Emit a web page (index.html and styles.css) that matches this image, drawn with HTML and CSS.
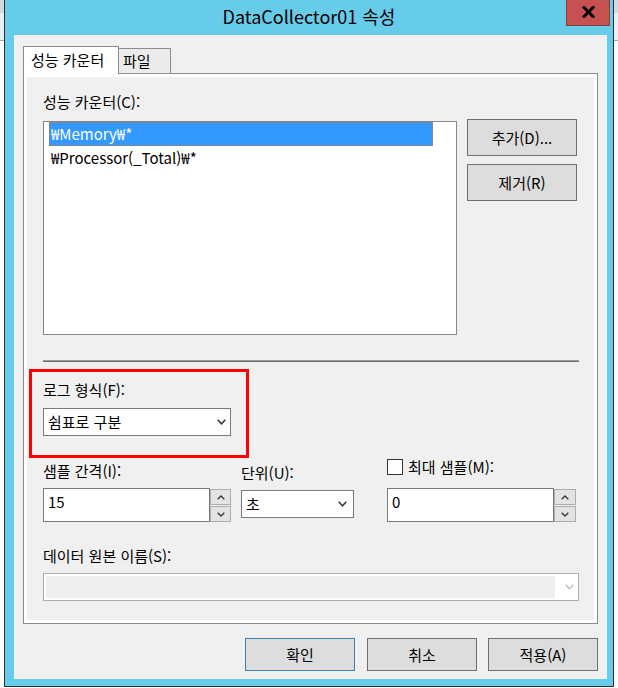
FILE: index.html
```html
<!DOCTYPE html>
<html lang="ko">
<head>
<meta charset="utf-8">
<title>DataCollector01 속성</title>
<link rel="stylesheet" href="styles.css">
</head>
<body>
<div class="window">
  <div class="titlebar">
    <div class="title">DataCollector01 속성</div>
    <div class="close">
      <svg width="13" height="12" viewBox="0 0 13 12"><path d="M2 1.5 L11 10.5 M11 1.5 L2 10.5" stroke="#000" stroke-width="3" stroke-linecap="square" fill="none"/></svg>
    </div>
  </div>
  <div class="client">
    <div class="tabs">
      <div class="tab active">성능 카운터</div>
      <div class="tab">파일</div>
    </div>
    <div class="panel">
      <div class="lbl">성능 카운터(C):</div>
      <div class="counters">
        <div class="listbox">
          <div class="item selected">₩Memory₩*</div>
          <div class="item">₩Processor(_Total)₩*</div>
        </div>
        <div class="sidebtns">
          <button class="btn tall">추가(D)...</button>
          <button class="btn tall">제거(R)</button>
        </div>
      </div>
      <div class="sep"></div>
      <div class="logfmt">
        <div class="annot"></div>
        <div class="lbl">로그 형식(F):</div>
        <div class="combo combo-log">
          <span class="combo-text">쉼표로 구분</span>
          <svg class="chev" width="9" height="6" viewBox="0 0 9 6"><polyline points="0.7,0.7 4.5,4.8 8.3,0.7" fill="none" stroke="#3c3c3c" stroke-width="1.6"/></svg>
        </div>
      </div>
      <div class="samples">
        <div class="col col-interval">
          <div class="lbl">샘플 간격(I):</div>
          <div class="spin">
            <div class="spin-input">15</div>
            <div class="spin-btns">
              <div class="sb"><svg width="8" height="5" viewBox="0 0 8 5"><polyline points="0.7,4.3 4,1 7.3,4.3" fill="none" stroke="#333" stroke-width="1.3"/></svg></div>
              <div class="sb"><svg width="8" height="5" viewBox="0 0 8 5"><polyline points="0.7,0.7 4,4 7.3,0.7" fill="none" stroke="#333" stroke-width="1.3"/></svg></div>
            </div>
          </div>
        </div>
        <div class="col col-unit">
          <div class="lbl">단위(U):</div>
          <div class="combo combo-unit">
            <span class="combo-text">초</span>
            <svg class="chev" width="9" height="6" viewBox="0 0 9 6"><polyline points="0.7,0.7 4.5,4.8 8.3,0.7" fill="none" stroke="#3c3c3c" stroke-width="1.6"/></svg>
          </div>
        </div>
        <div class="col col-max">
          <div class="checkrow"><span class="checkbox"></span><span class="lbl">최대 샘플(M):</span></div>
          <div class="spin">
            <div class="spin-input wide">0</div>
            <div class="spin-btns">
              <div class="sb"><svg width="8" height="5" viewBox="0 0 8 5"><polyline points="0.7,4.3 4,1 7.3,4.3" fill="none" stroke="#333" stroke-width="1.3"/></svg></div>
              <div class="sb"><svg width="8" height="5" viewBox="0 0 8 5"><polyline points="0.7,0.7 4,4 7.3,0.7" fill="none" stroke="#333" stroke-width="1.3"/></svg></div>
            </div>
          </div>
        </div>
      </div>
      <div class="lbl lbl-source">데이터 원본 이름(S):</div>
      <div class="combo-disabled">
        <div class="field"></div>
        <div class="arrow"><svg width="9" height="6" viewBox="0 0 9 6"><polyline points="0.7,0.7 4.5,4.8 8.3,0.7" fill="none" stroke="#bdbdbd" stroke-width="1.4"/></svg></div>
      </div>
    </div>
    <div class="footer">
      <button class="btn default">확인</button>
      <button class="btn cancel">취소</button>
      <button class="btn">적용(A)</button>
    </div>
  </div>
</div>
</body>
</html>
```

FILE: styles.css
```css
* { box-sizing: border-box; }
html, body { margin: 0; padding: 0; }
body {
  width: 618px;
  height: 688px;
  overflow: hidden;
  background: linear-gradient(#d3dbdf 0, #d3dbdf 13px, #eceff1 13px, #eceff1 40px, #a8a8a8 40px, #a8a8a8 41px, #ffffff 41px);
  font-family: "Noto Sans CJK KR", "Noto Sans", sans-serif;
  font-size: 15px;
  color: #000;
}

.window {
  margin-left: 4px;
  width: 610px;
  height: 687px;
  border: 1px solid #2e2e2e;
  border-top: none;
  background: #67cbea;
  padding-bottom: 7px;
  display: flex;
  flex-direction: column;
}

.titlebar {
  height: 35px;
  flex: none;
  display: grid;
  grid-template-columns: 1fr auto 1fr;
}
.title {
  grid-column: 2;
  font-size: 18px;
  line-height: 32px;
  color: #000;
  white-space: nowrap;
}
.close {
  grid-column: 3;
  justify-self: end;
  align-self: start;
  margin-right: 3px;
  width: 44px;
  height: 26px;
  background: #c75050;
  border: 1px solid #84403f;
  border-top: none;
  display: flex;
  align-items: center;
  justify-content: center;
  padding-bottom: 2px;
}
.close svg { display: block; }

.client {
  flex: 1;
  margin: 0 6px 0 9px;
  background: #f0f0f0;
  padding: 11px 9px 0 9px;
}

.tabs {
  display: flex;
  align-items: flex-end;
  height: 27px;
}
.tab {
  border: 1px solid #898c95;
  border-bottom: none;
  white-space: nowrap;
}
.tab.active {
  position: relative;
  z-index: 1;
  width: 96px;
  height: 28px;
  margin-bottom: -1px;
  background: #fff;
  padding-left: 7px;
  line-height: 26px;
}
.tab:not(.active) {
  width: 53px;
  height: 25px;
  margin-left: -1px;
  background: #ebebeb;
  padding-left: 4px;
  line-height: 24px;
}

.panel {
  height: 551px;
  border: 1px solid #898c95;
  box-shadow: inset 0 0 0 3px #fff;
  background: #f0f0f0;
  padding: 18px 18px 0 19px;
}

.lbl {
  display: block;
  height: 20px;
  line-height: 20px;
  white-space: nowrap;
}

.counters {
  display: flex;
  margin-top: 9px;
}
.listbox {
  width: 414px;
  height: 214px;
  border: 1px solid #828790;
  background: #fff;
  padding-left: 5px;
}
.item {
  width: 384px;
  height: 24px;
  line-height: 24px;
  padding-left: 2px;
  white-space: nowrap;
}
.item.selected {
  background: #3399ff;
  color: #fff;
  outline: 1px dotted #c9782a;
  outline-offset: -1px;
}
.sidebtns {
  margin-left: 10px;
  margin-top: -2px;
  display: flex;
  flex-direction: column;
  gap: 8px;
}

.btn {
  width: 110px;
  height: 33px;
  border: 1px solid #707070;
  background: #dddddd;
  font-family: inherit;
  font-size: 15px;
  color: #000;
  padding: 0;
  line-height: 20px;
}
.btn.tall { height: 37px; }
.btn.default { border-color: #3c7fb1; }

.sep {
  margin-top: 25px;
  height: 2px;
  border-top: 1px solid #9a9a9a;
  border-bottom: 1px solid #6f6f6f;
}

.logfmt {
  position: relative;
  margin-top: 18px;
}
.annot {
  position: absolute;
  left: -14px;
  top: -11px;
  width: 220px;
  height: 89px;
  border: 3px solid #ff0000;
  pointer-events: none;
}

.combo {
  display: flex;
  align-items: center;
  height: 28px;
  border: 1px solid #7a7a7a;
  background: #fff;
  padding-left: 4px;
}
.combo-text { flex: 1; white-space: nowrap; line-height: 20px; }
.chev { display: block; flex: none; }
.combo-log {
  width: 188px;
  margin-top: 8px;
  padding-right: 4px;
}

.samples {
  display: flex;
  align-items: flex-start;
  margin-top: 25px;
}
.col-interval { width: 188px; }
.col-interval .lbl { margin-top: 0; }
.col-interval .spin { margin-top: 7px; }
.col-unit { width: 113px; margin-left: 10px; }
.col-unit .lbl { margin-top: 2px; }
.combo-unit { margin-top: 7px; padding-right: 6px; }
.col-max { width: 189px; margin-left: 33px; }
.checkrow {
  display: flex;
  align-items: center;
  height: 20px;
  margin-top: -4px;
}
.checkbox {
  width: 16px;
  height: 16px;
  border: 1px solid #333;
  background: #fff;
  margin-right: 5px;
  flex: none;
}
.col-max .spin { margin-top: 11px; }

.spin {
  display: flex;
  height: 34px;
}
.spin-input {
  width: 167px;
  height: 34px;
  border: 1px solid #7a7a7a;
  background: #fff;
  padding: 3px 4px 0;
  line-height: 20px;
}
.spin-input.wide { width: 167px; }
.spin-btns {
  flex: 1;
  display: flex;
  flex-direction: column;
  padding-top: 1px;
  gap: 1px;
}
.sb {
  height: 16px;
  border: 1px solid #adadad;
  background: #e3e3e3;
  display: flex;
  align-items: center;
  justify-content: center;
}
.sb svg { display: block; }

.lbl-source { margin-top: 24px; }
.combo-disabled {
  display: flex;
  margin-top: 7px;
  width: 536px;
  height: 28px;
  border: 1px solid #adadad;
  background: #fff;
  padding: 2px 0 2px 2px;
}
.combo-disabled .field {
  flex: 1;
  background: #efefef;
}
.combo-disabled .arrow {
  width: 23px;
  display: flex;
  align-items: center;
  padding-left: 10px;
}
.combo-disabled .arrow svg { display: block; }

.footer {
  display: flex;
  justify-content: flex-end;
  margin-top: 14px;
}
.footer .default { margin-right: 12px; }
.footer .cancel { margin-right: 11px; }
```
